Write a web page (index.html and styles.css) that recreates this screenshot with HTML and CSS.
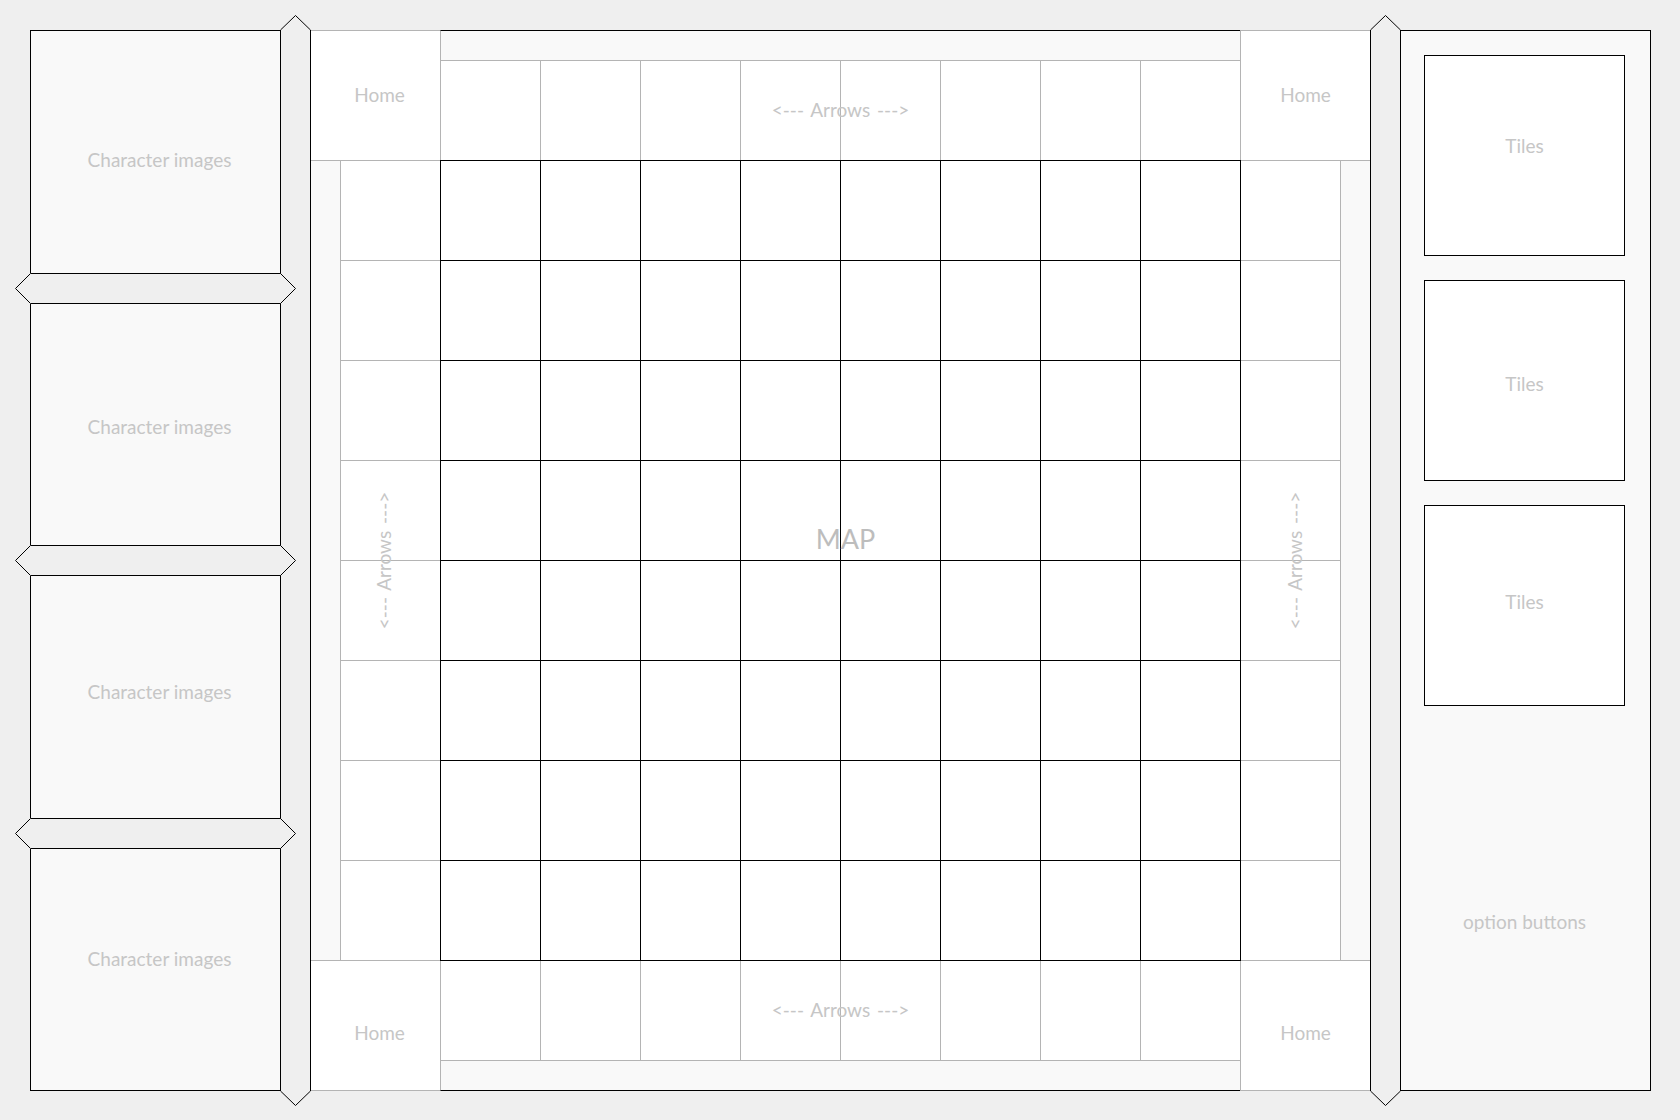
FILE: index.html
```html
<!DOCTYPE html>
<html>
<head lang="en">
    <meta charset="UTF-8">
    <title>Map editor</title>
    <link rel="stylesheet" href="styles.css">
</head>
<body>
<div class="page">
    <div class="chars">
        <div class="char c1">Character images</div>
        <div class="sep"><svg width="282" height="31"><polygon points="0.5,15.5 15.5,0.5 265.5,0.5 280.5,15.5 265.5,30.5 15.5,30.5"/></svg></div>
        <div class="char c2">Character images</div>
        <div class="sep"><svg width="282" height="31"><polygon points="0.5,15.5 15.5,0.5 265.5,0.5 280.5,15.5 265.5,30.5 15.5,30.5"/></svg></div>
        <div class="char c3">Character images</div>
        <div class="sep"><svg width="282" height="31"><polygon points="0.5,15.5 15.5,0.5 265.5,0.5 280.5,15.5 265.5,30.5 15.5,30.5"/></svg></div>
        <div class="char c4">Character images</div>
    </div>

    <div class="bar">
        <svg width="31" height="15"><path d="M0.5 15 L15.5 0.5 L30.5 15"/></svg>
        <div class="bar-body"></div>
        <svg width="31" height="15"><path d="M0.5 0 L15.5 14.5 L30.5 0"/></svg>
    </div>

    <div class="board">
        <div class="home home-tl">Home</div>
        <div class="strip strip-top"></div>
        <div class="home home-tr">Home</div>

        <div class="arrows arrows-top">
            <div></div><div></div><div></div><div></div><div></div><div></div><div></div><div></div>
            <span class="label">&lt;--- Arrows ---&gt;</span>
        </div>

        <div class="strip strip-left"></div>
        <div class="arrows arrows-left">
            <div></div><div></div><div></div><div></div><div></div><div></div><div></div><div></div>
            <span class="label"><span>&lt;--- Arrows ---&gt;</span></span>
        </div>

        <div class="map">
            <div></div><div></div><div></div><div></div><div></div><div></div><div></div><div></div>
            <div></div><div></div><div></div><div></div><div></div><div></div><div></div><div></div>
            <div></div><div></div><div></div><div></div><div></div><div></div><div></div><div></div>
            <div></div><div></div><div></div><div></div><div></div><div></div><div></div><div></div>
            <div></div><div></div><div></div><div></div><div></div><div></div><div></div><div></div>
            <div></div><div></div><div></div><div></div><div></div><div></div><div></div><div></div>
            <div></div><div></div><div></div><div></div><div></div><div></div><div></div><div></div>
            <div></div><div></div><div></div><div></div><div></div><div></div><div></div><div></div>
            <span class="label">MAP</span>
        </div>

        <div class="arrows arrows-right">
            <div></div><div></div><div></div><div></div><div></div><div></div><div></div><div></div>
            <span class="label"><span>&lt;--- Arrows ---&gt;</span></span>
        </div>
        <div class="strip strip-right"></div>

        <div class="home home-bl">Home</div>
        <div class="arrows arrows-bottom">
            <div></div><div></div><div></div><div></div><div></div><div></div><div></div><div></div>
            <span class="label">&lt;--- Arrows ---&gt;</span>
        </div>
        <div class="home home-br">Home</div>
        <div class="strip strip-bottom"></div>
    </div>

    <div class="bar">
        <svg width="31" height="15"><path d="M0.5 15 L15.5 0.5 L30.5 15"/></svg>
        <div class="bar-body"></div>
        <svg width="31" height="15"><path d="M0.5 0 L15.5 14.5 L30.5 0"/></svg>
    </div>

    <div class="panel">
        <div class="tile t1">Tiles</div>
        <div class="tile t2">Tiles</div>
        <div class="tile t3">Tiles</div>
        <div class="options">option buttons</div>
    </div>
</div>
</body>
</html>
```

FILE: styles.css
```css
*{
    margin:0;
    padding:0;
    box-sizing:border-box;
}
body{
    background:#efefef;
    font-family:Lato, "Liberation Sans", sans-serif;
    font-size:19px;
    color:#c6c6c6;
}
.page{
    display:flex;
    align-items:flex-start;
    height:1120px;
    padding:30px 0 0 30px;
}

/* left column */
.chars{
    width:250px;
    height:1061px;
    display:flex;
    flex-direction:column;
}
.char{
    height:242px;
    background:#f9f9f9;
    border-left:1px solid #000;
    display:flex;
    align-items:center;
    justify-content:center;
    padding-left:8px;
}
.c1{
    height:243px;
    border-top:1px solid #000;
    padding-top:15px;
}
.c2{
    height:241px;
    padding-top:3px;
}
.c3{
    padding-bottom:11px;
}
.c4{
    border-bottom:1px solid #000;
    padding-bottom:22px;
}
.sep{
    height:31px;
    position:relative;
    z-index:1;
}
.sep svg{
    display:block;
    margin-left:-15px;
    overflow:visible;
}
.sep polygon,
.bar path{
    fill:#efefef;
    stroke:#000;
    stroke-width:1;
}

/* scroll bars */
.bar{
    width:31px;
    height:1091px;
    margin-top:-15px;
    display:flex;
    flex-direction:column;
}
.bar svg{
    display:block;
}
.bar-body{
    flex:1;
    background:#efefef;
    border-left:1px solid #000;
    border-right:1px solid #000;
}

/* board */
.board{
    width:1059px;
    height:1061px;
    display:grid;
    grid-template-columns:29px 100px 800px 101px 29px;
    grid-template-rows:30px 100px 800px 101px 30px;
    background:#fff;
}
.home{
    background:#fff;
    display:flex;
    align-items:center;
    justify-content:center;
    border-top:1px solid #b4b4b4;
}
.home-tl{
    grid-column:1 / 3;
    grid-row:1 / 3;
    padding:0 0 3px 8px;
}
.home-tr{
    grid-column:4 / 6;
    grid-row:1 / 3;
    border-left:1px solid #b4b4b4;
    padding-bottom:3px;
}
.home-bl{
    grid-column:1 / 3;
    grid-row:4 / 6;
    border-bottom:1px solid #b4b4b4;
    padding:13px 0 0 8px;
}
.home-br{
    grid-column:4 / 6;
    grid-row:4 / 6;
    border-left:1px solid #b4b4b4;
    border-bottom:1px solid #b4b4b4;
    padding-top:13px;
}
.strip{
    background:#f9f9f9;
}
.strip-top{
    grid-column:3;
    grid-row:1;
    border-top:1px solid #000;
    border-left:1px solid #b4b4b4;
}
.strip-bottom{
    grid-column:3;
    grid-row:5;
    border-bottom:1px solid #000;
    border-left:1px solid #b4b4b4;
}
.strip-left{
    grid-column:1;
    grid-row:3;
    border-top:1px solid #b4b4b4;
}
.strip-right{
    grid-column:5;
    grid-row:3;
    border-top:1px solid #b4b4b4;
}

.arrows{
    position:relative;
    display:grid;
    gap:1px;
    background:#b4b4b4;
}
.arrows div{
    background:#fff;
}
.arrows-top,
.arrows-bottom{
    grid-column:3;
    grid-template-columns:repeat(8, 99px);
    grid-template-rows:99px;
    border-left:1px solid #b4b4b4;
}
.arrows-top{
    grid-row:2;
    border-top:1px solid #b4b4b4;
}
.arrows-bottom{
    grid-row:4;
    padding-top:1px;
    border-bottom:1px solid #b4b4b4;
}
.arrows-left,
.arrows-right{
    grid-row:3;
    grid-template-columns:99px;
    grid-template-rows:repeat(8, 99px);
    border-top:1px solid #b4b4b4;
}
.arrows-left{
    grid-column:2;
    border-left:1px solid #b4b4b4;
}
.arrows-right{
    grid-column:4;
    padding-left:1px;
    border-right:1px solid #b4b4b4;
}
.label{
    position:absolute;
    top:0;
    right:0;
    bottom:0;
    left:0;
    display:flex;
    align-items:center;
    justify-content:center;
    white-space:nowrap;
    word-spacing:2px;
}
.arrows-top .label,
.arrows-bottom .label{
    padding-bottom:2px;
}
.arrows-left .label{
    padding-right:14px;
}
.arrows-right .label{
    padding-left:9px;
}
.arrows-left .label span,
.arrows-right .label span{
    transform:rotate(-90deg);
}

.map{
    grid-column:3;
    grid-row:3;
    width:801px;
    height:801px;
    position:relative;
    z-index:1;
    display:grid;
    grid-template-columns:repeat(8, 99px);
    grid-template-rows:repeat(8, 99px);
    gap:1px;
    background:#000;
    border:1px solid #000;
}
.map div{
    background:#fff;
}
.map .label{
    font-size:27px;
    color:#bdbdbd;
    padding:0 0 44px 10px;
}

/* right column */
.panel{
    width:250px;
    height:1061px;
    background:#f9f9f9;
    border:1px solid #000;
    border-left:none;
    display:flex;
    flex-direction:column;
    padding:24px 0 0 23px;
}
.tile{
    width:201px;
    height:201px;
    margin-bottom:24px;
    background:#fff;
    border:1px solid #000;
    display:flex;
    align-items:center;
    justify-content:center;
}
.t1{
    padding-bottom:20px;
}
.t2{
    padding-top:5px;
}
.t3{
    padding-bottom:8px;
}
.options{
    width:201px;
    flex:1;
    display:flex;
    align-items:center;
    justify-content:center;
    padding-top:23px;
}
```
